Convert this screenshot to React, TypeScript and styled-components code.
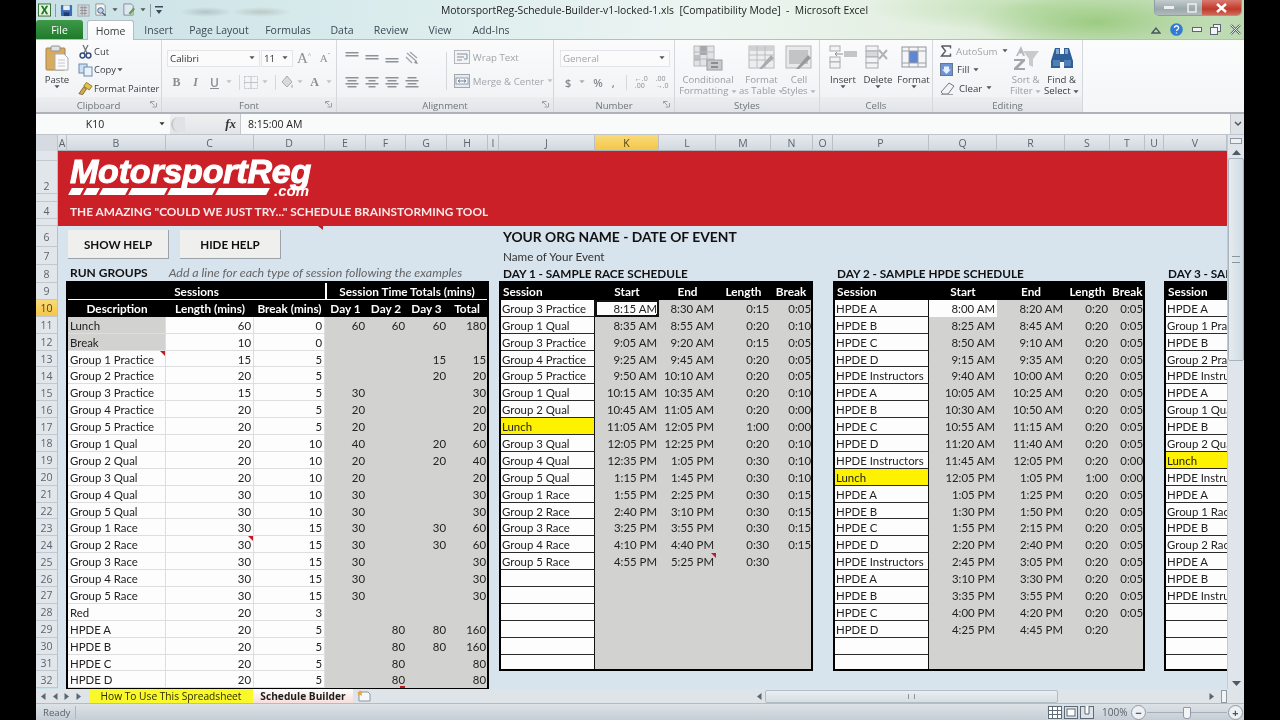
import React from 'react'
import styled, { createGlobalStyle } from 'styled-components'

const ROW = 16.9
const UI_FONT = '"Open Sans", "Noto Sans", sans-serif'
const SHEET_FONT = 'Lato, "Noto Sans", sans-serif'

const GlobalStyle = createGlobalStyle`
  html, body { margin: 0; padding: 0; background: #000; }
  #root { width: 1280px; height: 720px; overflow: hidden; }
`

/* ---------- data ---------- */

const COLUMNS: [string, number][] = [
  ['A', 9], ['B', 99], ['C', 88], ['D', 71], ['E', 41], ['F', 40], ['G', 41], ['H', 41], ['I', 11],
  ['J', 96], ['K', 64], ['L', 57], ['M', 55], ['N', 42], ['O', 20], ['P', 96], ['Q', 68], ['R', 68],
  ['S', 45], ['T', 35], ['U', 19], ['V', 63],
]

const TOP_ROWS: [string, number][] = [
  ['', 10], ['2', 33], ['', 8], ['4', 17], ['', 7], ['6', 21], ['7', 18], ['8', 18],
]

const RUN_GROUPS = [
  ['Lunch', '60', '0', '60', '60', '60', '180'],
  ['Break', '10', '0', '', '', '', ''],
  ['Group 1 Practice', '15', '5', '', '', '15', '15'],
  ['Group 2 Practice', '20', '5', '', '', '20', '20'],
  ['Group 3 Practice', '15', '5', '30', '', '', '30'],
  ['Group 4 Practice', '20', '5', '20', '', '', '20'],
  ['Group 5 Practice', '20', '5', '20', '', '', '20'],
  ['Group 1 Qual', '20', '10', '40', '', '20', '60'],
  ['Group 2 Qual', '20', '10', '20', '', '20', '40'],
  ['Group 3 Qual', '20', '10', '20', '', '', '20'],
  ['Group 4 Qual', '30', '10', '30', '', '', '30'],
  ['Group 5 Qual', '30', '10', '30', '', '', '30'],
  ['Group 1 Race', '30', '15', '30', '', '30', '60'],
  ['Group 2 Race', '30', '15', '30', '', '30', '60'],
  ['Group 3 Race', '30', '15', '30', '', '', '30'],
  ['Group 4 Race', '30', '15', '30', '', '', '30'],
  ['Group 5 Race', '30', '15', '30', '', '', '30'],
  ['Red', '20', '3', '', '', '', ''],
  ['HPDE A', '20', '5', '', '80', '80', '160'],
  ['HPDE B', '20', '5', '', '80', '80', '160'],
  ['HPDE C', '20', '5', '', '80', '', '80'],
  ['HPDE D', '20', '5', '', '80', '', '80'],
]

const DAY_ONE = [
  ['Group 3 Practice', '8:15 AM', '8:30 AM', '0:15', '0:05'],
  ['Group 1 Qual', '8:35 AM', '8:55 AM', '0:20', '0:10'],
  ['Group 3 Practice', '9:05 AM', '9:20 AM', '0:15', '0:05'],
  ['Group 4 Practice', '9:25 AM', '9:45 AM', '0:20', '0:05'],
  ['Group 5 Practice', '9:50 AM', '10:10 AM', '0:20', '0:05'],
  ['Group 1 Qual', '10:15 AM', '10:35 AM', '0:20', '0:10'],
  ['Group 2 Qual', '10:45 AM', '11:05 AM', '0:20', '0:00'],
  ['Lunch', '11:05 AM', '12:05 PM', '1:00', '0:00'],
  ['Group 3 Qual', '12:05 PM', '12:25 PM', '0:20', '0:10'],
  ['Group 4 Qual', '12:35 PM', '1:05 PM', '0:30', '0:10'],
  ['Group 5 Qual', '1:15 PM', '1:45 PM', '0:30', '0:10'],
  ['Group 1 Race', '1:55 PM', '2:25 PM', '0:30', '0:15'],
  ['Group 2 Race', '2:40 PM', '3:10 PM', '0:30', '0:15'],
  ['Group 3 Race', '3:25 PM', '3:55 PM', '0:30', '0:15'],
  ['Group 4 Race', '4:10 PM', '4:40 PM', '0:30', '0:15'],
  ['Group 5 Race', '4:55 PM', '5:25 PM', '0:30', ''],
  [], [], [], [], [], [],
]

const DAY_TWO = [
  ['HPDE A', '8:00 AM', '8:20 AM', '0:20', '0:05'],
  ['HPDE B', '8:25 AM', '8:45 AM', '0:20', '0:05'],
  ['HPDE C', '8:50 AM', '9:10 AM', '0:20', '0:05'],
  ['HPDE D', '9:15 AM', '9:35 AM', '0:20', '0:05'],
  ['HPDE Instructors', '9:40 AM', '10:00 AM', '0:20', '0:05'],
  ['HPDE A', '10:05 AM', '10:25 AM', '0:20', '0:05'],
  ['HPDE B', '10:30 AM', '10:50 AM', '0:20', '0:05'],
  ['HPDE C', '10:55 AM', '11:15 AM', '0:20', '0:05'],
  ['HPDE D', '11:20 AM', '11:40 AM', '0:20', '0:05'],
  ['HPDE Instructors', '11:45 AM', '12:05 PM', '0:20', '0:00'],
  ['Lunch', '12:05 PM', '1:05 PM', '1:00', '0:00'],
  ['HPDE A', '1:05 PM', '1:25 PM', '0:20', '0:05'],
  ['HPDE B', '1:30 PM', '1:50 PM', '0:20', '0:05'],
  ['HPDE C', '1:55 PM', '2:15 PM', '0:20', '0:05'],
  ['HPDE D', '2:20 PM', '2:40 PM', '0:20', '0:05'],
  ['HPDE Instructors', '2:45 PM', '3:05 PM', '0:20', '0:05'],
  ['HPDE A', '3:10 PM', '3:30 PM', '0:20', '0:05'],
  ['HPDE B', '3:35 PM', '3:55 PM', '0:20', '0:05'],
  ['HPDE C', '4:00 PM', '4:20 PM', '0:20', '0:05'],
  ['HPDE D', '4:25 PM', '4:45 PM', '0:20', ''],
  [], [],
]

const DAY_THREE = [
  'HPDE A', 'Group 1 Practice', 'HPDE B', 'Group 2 Practice', 'HPDE Instructors', 'HPDE A', 'Group 1 Qual',
  'HPDE B', 'Group 2 Qual', 'Lunch', 'HPDE Instructors', 'HPDE A', 'Group 1 Race', 'HPDE B', 'Group 2 Race',
  'HPDE A', 'HPDE B', 'HPDE Instructors', '', '', '', '',
].map((s) => (s ? [s, '', '', '', ''] : []))

const DAY_HEADERS = ['Session', 'Start', 'End', 'Length', 'Break']

/* ---------- icons ---------- */

const Arrow = ({ color = '#555' }: { color?: string }) => (
  <svg width="6" height="4" viewBox="0 0 7 4"><path d="M0.5 0h6L3.5 3.6z" fill={color} /></svg>
)

const ExcelLogo = () => (
  <svg width="13" height="14" viewBox="0 0 14 14">
    <rect x="0.5" y="0.5" width="13" height="13" fill="#e9f3dd" stroke="#2b6b2b" />
    <path d="M3 2.5h2.4L7 5.5l1.6-3H11L8.3 7 11 11.5H8.6L7 8.4l-1.6 3.1H3L5.7 7z" fill="#1f7a2e" />
  </svg>
)

const SaveIcon = () => (
  <svg width="13" height="13" viewBox="0 0 14 14">
    <rect x="1" y="1" width="12" height="12" rx="1" fill="#3d6db5" />
    <rect x="3.5" y="1.5" width="7" height="5" fill="#e8eef6" />
    <rect x="4" y="9" width="6" height="4" fill="#1e3a72" />
  </svg>
)

const CalcIcon = () => (
  <svg width="13" height="13" viewBox="0 0 14 14">
    <rect x="1" y="1" width="12" height="12" fill="#d5d7da" stroke="#a3a6aa" />
    <path d="M3 4h8M3 7h8M3 10h8M5.5 2v10M8.5 2v10" stroke="#8d9094" />
  </svg>
)

const PreviewIcon = () => (
  <svg width="14" height="14" viewBox="0 0 15 15">
    <path d="M2 1h8l2 2v10H2z" fill="#f4f5f6" stroke="#8d9094" />
    <circle cx="7" cy="8" r="3" fill="#bcd6ee" stroke="#46607e" />
    <path d="M9 10.5l3.5 3" stroke="#46607e" strokeWidth="1.6" />
  </svg>
)

const PageEditIcon = () => (
  <svg width="14" height="14" viewBox="0 0 15 15">
    <path d="M2 1h8l2 2v10H2z" fill="#dfe8f2" stroke="#7f8c9a" />
    <path d="M7 11l5-6 2 1.5-5 6z" fill="#62a044" />
  </svg>
)

const CustomizeIcon = () => (
  <svg width="8" height="10" viewBox="0 0 8 10"><path d="M0 1h8v1.5H0zM1 5h6L4 9z" fill="#3a4a5a" /></svg>
)

const PasteIcon = () => (
  <svg width="24" height="26" viewBox="0 0 24 26">
    <rect x="1" y="3" width="19" height="22" rx="1" fill="#d8ac5f" stroke="#a4834a" />
    <rect x="6" y="1" width="9" height="5" rx="1" fill="#dfe2e6" stroke="#8f949a" />
    <path d="M10 9h9l4 4v12H10z" fill="#fbfbfb" stroke="#a9adb2" />
    <path d="M13 15h7M13 18h7M13 21h7" stroke="#c2c6cb" />
  </svg>
)

const CutIcon = () => (
  <svg width="15" height="15" viewBox="0 0 15 15">
    <path d="M5 1l4 8M10 1L6 9" stroke="#6f7680" strokeWidth="1.3" />
    <circle cx="4.5" cy="11.5" r="2.4" fill="none" stroke="#33507c" strokeWidth="1.5" />
    <circle cx="10.5" cy="11.5" r="2.4" fill="none" stroke="#33507c" strokeWidth="1.5" />
  </svg>
)

const CopyIcon = () => (
  <svg width="15" height="14" viewBox="0 0 15 14">
    <rect x="1" y="1" width="8" height="9" fill="#cddff2" stroke="#6a8ab0" />
    <rect x="6" y="4" width="8" height="9" fill="#eaf2fb" stroke="#6a8ab0" />
  </svg>
)

const PainterIcon = () => (
  <svg width="15" height="15" viewBox="0 0 16 15">
    <path d="M9 1l6 4-3 4-6-4z" fill="#e3c24b" stroke="#8d7728" />
    <path d="M6 6l3 2-4 6-4-1z" fill="#d7a948" stroke="#7d6a37" />
  </svg>
)

const Launcher = () => (
  <svg width="7" height="7" viewBox="0 0 7 7">
    <path d="M0.5 2.5v-2h4M0.5 0.5l4 4M2.5 6h4V2" stroke="#9aa0a6" fill="none" />
  </svg>
)

const LinesIcon = ({ widths, color = '#8e9297' }: { widths: number[]; color?: string }) => (
  <svg width="14" height="12" viewBox="0 0 14 12">
    {widths.map((w, i) => (
      <rect key={i} x={(14 - w) / 2} y={1 + i * 3} width={w} height="1.5" fill={color} />
    ))}
  </svg>
)

const OrientIcon = () => (
  <svg width="15" height="14" viewBox="0 0 15 14">
    <path d="M2 2l9 8M5 1l7 6M1 6l6 6" stroke="#a2a6ab" strokeWidth="1.4" />
    <path d="M11 9l2 4-4-1z" fill="#8e9297" />
  </svg>
)

const WrapIcon = () => (
  <svg width="16" height="14" viewBox="0 0 16 14">
    <rect x="0.5" y="0.5" width="15" height="13" fill="#f2f3f4" stroke="#b4b7bb" />
    <path d="M3 4h10M3 7h7M3 10h5" stroke="#8b8f94" />
    <path d="M13 4v5h-3" stroke="#7b93b3" fill="none" />
  </svg>
)

const MergeIcon = () => (
  <svg width="16" height="14" viewBox="0 0 16 14">
    <rect x="0.5" y="0.5" width="15" height="13" fill="#e8eaec" stroke="#a4a7ab" />
    <rect x="2" y="4" width="12" height="6" fill="#fbfbfb" stroke="#8a9cb6" />
    <path d="M4 7h8M4 7l2-1.5M4 7l2 1.5M12 7l-2-1.5M12 7l-2 1.5" stroke="#6d7f97" />
  </svg>
)

const CondIcon = () => (
  <svg width="30" height="26" viewBox="0 0 30 26">
    <rect x="1" y="1" width="20" height="20" fill="#e2e3e5" stroke="#b6b8bc" />
    <rect x="7" y="1" width="7" height="9" fill="#a4a7ab" />
    <rect x="1" y="10" width="6" height="6" fill="#bfc1c4" />
    <path d="M1 7h20M1 14h20M7 1v20M14 1v20" stroke="#b6b8bc" />
    <rect x="14" y="15" width="15" height="10" fill="#c7c9cc" stroke="#9c9ea2" />
    <path d="M18 18h7M18 22h7" stroke="#77797d" strokeWidth="1.5" />
  </svg>
)

const TableIcon = () => (
  <svg width="28" height="26" viewBox="0 0 28 26">
    <rect x="1" y="1" width="25" height="22" fill="#eceded" stroke="#b8babd" />
    <rect x="1" y="1" width="25" height="5" fill="#cfd1d3" />
    <path d="M1 10h25M1 15h25M9 1v22M17 1v22" stroke="#babcbf" />
    <path d="M11 24l12-14 3 3-12 11z" fill="#a9abae" />
  </svg>
)

const CellStyleIcon = () => (
  <svg width="28" height="26" viewBox="0 0 28 26">
    <rect x="1" y="1" width="25" height="22" fill="#e8e9ea" stroke="#b3b5b8" />
    <rect x="4" y="5" width="19" height="14" fill="#c2c4c6" />
    <path d="M11 24l12-14 3 3-12 11z" fill="#97999c" />
  </svg>
)

const InsertIcon = () => (
  <svg width="28" height="24" viewBox="0 0 28 24">
    <rect x="1" y="1" width="10" height="5" fill="#f3f3f3" stroke="#a9acb0" />
    <rect x="1" y="12" width="10" height="5" fill="#f3f3f3" stroke="#a9acb0" />
    <rect x="1" y="17" width="10" height="6" fill="#f3f3f3" stroke="#a9acb0" />
    <rect x="15" y="6" width="13" height="6" fill="#c3c5c8" />
    <path d="M6 9h8M6 9l2-2M6 9l2 2" stroke="#8d9094" />
  </svg>
)

const DeleteIcon = () => (
  <svg width="26" height="24" viewBox="0 0 26 24">
    <rect x="1" y="1" width="12" height="5" fill="#f3f3f3" stroke="#a9acb0" />
    <rect x="1" y="6" width="12" height="6" fill="#d6d8da" stroke="#a9acb0" />
    <rect x="1" y="12" width="12" height="6" fill="#f3f3f3" stroke="#a9acb0" />
    <rect x="1" y="18" width="12" height="5" fill="#f3f3f3" stroke="#a9acb0" />
    <path d="M14 5l8 9M22 5l-8 9" stroke="#b0b2b5" strokeWidth="2" />
  </svg>
)

const FormatIcon = () => (
  <svg width="26" height="24" viewBox="0 0 26 24">
    <rect x="1" y="2" width="24" height="20" fill="#f4f5f6" stroke="#8f959c" />
    <rect x="8" y="6" width="9" height="12" fill="#5f86cf" />
    <path d="M1 6h24M1 18h24M8 2v20M17 2v20" stroke="#9aa0a6" />
  </svg>
)

const SigmaIcon = () => (
  <svg width="12" height="12" viewBox="0 0 12 12">
    <path d="M1.5 1h9v2.5M10.5 11h-9l4-5-4-5M1.5 11h9V8.5" fill="none" stroke="#555b62" strokeWidth="1.4" />
  </svg>
)

const FillIcon = () => (
  <svg width="13" height="13" viewBox="0 0 13 13">
    <rect x="0.5" y="0.5" width="12" height="12" fill="#6a95d8" stroke="#6b7686" />
    <path d="M4 3.5h5v3h2L6.5 11 2 6.5h2z" fill="#e6eef9" />
  </svg>
)

const EraserIcon = () => (
  <svg width="15" height="13" viewBox="0 0 15 13">
    <path d="M9 1l5 3-6 8H3L1 10z" fill="#f3f3f3" stroke="#727880" />
    <path d="M1 12.5h12" stroke="#9aa0a6" />
  </svg>
)

const SortIcon = () => (
  <svg width="28" height="26" viewBox="0 0 28 26">
    <path d="M9 1l4 10h-2l-1-2.5H7L6 11H4z" fill="#b7babd" />
    <path d="M2 14h11v2l-7 7h7v2H2v-2l7-7H2z" fill="#a3a6a9" />
    <path d="M11 6h16l-6 8v8l-4-2v-6z" fill="#c8cacc" />
  </svg>
)

const FindIcon = () => (
  <svg width="24" height="24" viewBox="0 0 24 24">
    <path d="M5 3h5v6h4V3h5l4 13v7H14v-6h-4v6H1v-7z" fill="#2f5f98" />
    <path d="M6 4h3v5H6zM15 4h3v5h-3z" fill="#7ea5cf" />
    <rect x="3" y="15" width="7" height="6" fill="#4f7fb5" />
    <rect x="14" y="15" width="7" height="6" fill="#4f7fb5" />
  </svg>
)

const HelpIcon = () => (
  <svg width="13" height="13" viewBox="0 0 13 13">
    <circle cx="6.5" cy="6.5" r="6.3" fill="#2f7cd6" />
    <path d="M4.4 4.8a2.1 2 0 1 1 3.2 1.7c-.8.5-1.1.8-1.1 1.6M6.5 9.4v1.2" fill="none" stroke="#fff" strokeWidth="1.4" />
  </svg>
)

const NewSheetIcon = () => (
  <svg width="14" height="12" viewBox="0 0 14 12">
    <path d="M2 2h9l2 2v7H2z" fill="#f7f8f9" stroke="#8b96a4" />
    <path d="M3 0l1 2 2 0-1.5 1.5L5 6 3 4.7 1 6l.5-2.5L0 2h2z" fill="#e2a73f" />
  </svg>
)

const ViewIcon = ({ kind }: { kind: 'grid' | 'page' | 'break' }) => (
  <svg width="14" height="13" viewBox="0 0 14 13">
    <rect x="0.5" y="0.5" width="13" height="12" fill={kind === 'grid' ? '#fff' : '#dfe3e7'} stroke="#5d6a78" />
    {kind === 'grid' && <path d="M0 4.5h14M0 8.5h14M4.5 0v13M9.5 0v13" stroke="#5d6a78" />}
    {kind === 'page' && <rect x="3" y="3" width="8" height="7" fill="#fff" stroke="#5d6a78" />}
    {kind === 'break' && <path d="M5 0v8h4V0" fill="#fff" stroke="#5d6a78" />}
  </svg>
)

const TRIANGLE_LEFT = (
  <svg width="5" height="7" viewBox="0 0 5 7"><path d="M4.5 0v7L0 3.5z" fill="#5b6672" /></svg>
)
const TRIANGLE_RIGHT = (
  <svg width="5" height="7" viewBox="0 0 5 7"><path d="M0.5 0v7L5 3.5z" fill="#5b6672" /></svg>
)

/* ---------- components ---------- */

const DayTable: React.FC<{
  title: string
  cols: number[]
  rows: string[][]
  active?: boolean
  whiteStart?: boolean
  note?: boolean
  width: number
}> = ({ title, cols, rows, active, whiteStart, note, width }) => (
  <Day $width={width}>
    <DayTitle>{title}</DayTitle>
    <ScheduleGrid $cols={cols.map((c) => `${c}px`).join(' ')}>
      {DAY_HEADERS.map((h, i) => (
        <HeadCell key={h} $align={i === 0 ? 'left' : 'center'}>{h}</HeadCell>
      ))}
      {rows.map((row, r) => (
        <React.Fragment key={r}>
          <SessionCell $lunch={row[0] === 'Lunch'}>{row[0]}</SessionCell>
          {[1, 2, 3, 4].map((c) => (
            <TimeCell key={c} $flush={c === 4} $white={c === 1 && r === 0 && (whiteStart || active)}>
              {row[c]}
              {active && c === 1 && r === 0 && <ActiveBox />}
              {note && c === 2 && r === 15 && <Note />}
            </TimeCell>
          ))}
        </React.Fragment>
      ))}
    </ScheduleGrid>
  </Day>
)

const LargeButton: React.FC<{
  icon: React.ReactNode
  lines: string[]
  width: number
  dim?: boolean
}> = ({ icon, lines, width, dim }) => (
  <Large $width={width} $dim={dim}>
    <LargeIcon>{icon}</LargeIcon>
    {lines.map((l, i) => (
      <div key={l}>
        {l}
        {i === lines.length - 1 && lines.length > 1 && (
          <> <Arrow color={dim ? '#b5b8bb' : '#555'} /></>
        )}
      </div>
    ))}
    {lines.length === 1 && <Arrow color={dim ? '#b5b8bb' : '#555'} />}
  </Large>
)

/* a ribbon group: content on top, caption below */
function Group({ $width, label, launcher, children }: {
  $width: number
  label: string
  launcher?: boolean
  children: React.ReactNode
}) {
  return (
    <GroupBox $width={$width}>
      <GroupBody>{children}</GroupBody>
      <GroupLabel>
        {label}
        {launcher && <LauncherSlot><Launcher /></LauncherSlot>}
      </GroupLabel>
    </GroupBox>
  )
}

const App: React.FC = () => (
  <>
    <GlobalStyle />
    <Screen>
      <Window>
        <TitleBar>
          <QuickAccess>
            <ExcelLogo />
            <QuickSep />
            <SaveIcon />
            <CalcIcon />
            <PreviewIcon />
            <Arrow />
            <PageEditIcon />
            <Arrow />
            <QuickSep />
            <CustomizeIcon />
          </QuickAccess>
          <WindowTitle>MotorsportReg-Schedule-Builder-v1-locked-1.xls&nbsp; [Compatibility Mode]&nbsp; -&nbsp; Microsoft Excel</WindowTitle>
          <WindowControls>
            <WinButton $width={27}><svg width="10" height="3"><rect width="10" height="3" fill="#eee" /></svg></WinButton>
            <WinButton $width={20}><svg width="10" height="10"><rect x="1" y="1" width="8" height="8" fill="none" stroke="#eee" strokeWidth="1.5" /></svg></WinButton>
            <WinButton $width={39} $close><svg width="11" height="10" viewBox="0 0 11 10"><path d="M1 1l9 8M10 1l-9 8" stroke="#fff" strokeWidth="2.4" /></svg></WinButton>
          </WindowControls>
        </TitleBar>

        <TabRow>
          <FileTab>File</FileTab>
          <HomeTab>Home</HomeTab>
          <RibbonTab $width={49}>Insert</RibbonTab>
          <RibbonTab $width={72}>Page Layout</RibbonTab>
          <RibbonTab $width={66}>Formulas</RibbonTab>
          <RibbonTab $width={42}>Data</RibbonTab>
          <RibbonTab $width={56}>Review</RibbonTab>
          <RibbonTab $width={42}>View</RibbonTab>
          <RibbonTab $width={60}>Add-Ins</RibbonTab>
          <TabTools>
            <svg width="10" height="8" viewBox="0 0 10 8"><path d="M1 7l4-5 4 5H1z" fill="none" stroke="#4a5561" strokeWidth="1.3" /></svg>
            <HelpIcon />
            <svg width="10" height="6"><rect x="0.5" y="0.5" width="9" height="4" fill="#f2f4f6" stroke="#5c6670" /></svg>
            <svg width="11" height="11"><rect x="3.5" y="0.5" width="7" height="7" fill="#f2f4f6" stroke="#5c6670" /><rect x="0.5" y="3.5" width="7" height="7" fill="#f2f4f6" stroke="#5c6670" /></svg>
            <svg width="11" height="11" viewBox="0 0 11 11"><path d="M1 1l9 9M10 1l-9 9" stroke="#5c6670" strokeWidth="2.4" /><path d="M1 1l9 9M10 1l-9 9" stroke="#f2f4f6" strokeWidth="0.9" /></svg>
          </TabTools>
        </TabRow>

        <Ribbon>
          <Group $width={126} label="Clipboard" launcher>
            <ClipboardBody>
              <Large $width={42}>
                <LargeIcon><PasteIcon /></LargeIcon>
                <div>Paste</div>
                <Arrow />
              </Large>
              <SmallList>
                <SmallItem><CutIcon />Cut</SmallItem>
                <SmallItem><CopyIcon />Copy <Arrow /></SmallItem>
                <SmallItem><PainterIcon />Format Painter</SmallItem>
              </SmallList>
            </ClipboardBody>
          </Group>

          <Group $width={175} label="Font" launcher>
            <ToolRows $pad={5}>
              <ToolRow>
                <Combo $width={93}>Calibri <Arrow /></Combo>
                <Combo $width={32}>11 <Arrow /></Combo>
                <GrowGlyph $size={15}>A<sup>^</sup></GrowGlyph>
                <GrowGlyph $size={11}>A<sup>ˇ</sup></GrowGlyph>
              </ToolRow>
              <ToolRow $gap={0}>
                <FormatGlyph $weight={700} $serif>B</FormatGlyph>
                <FormatGlyph $italic $serif>I</FormatGlyph>
                <FormatGlyph $underline>U</FormatGlyph>
                <ArrowSlot $width={9}><Arrow color="#c0c3c6" /></ArrowSlot>
                <ToolSep $before={6} $after={4} />
                <svg width="14" height="13"><rect x="0.5" y="0.5" width="13" height="12" fill="none" stroke="#c0c3c6" strokeDasharray="2 1" /><path d="M7 0v13M0 6.5h14" stroke="#c0c3c6" /></svg>
                <ArrowSlot $width={14}><Arrow color="#c0c3c6" /></ArrowSlot>
                <ToolSep $before={3} $after={3} />
                <svg width="16" height="14" viewBox="0 0 16 14"><path d="M3 7l5-6 5 6-5 5z" fill="#d7d9db" stroke="#a9acaf" /><path d="M13 9c1 2 2 3 0 4-2-1-1-2 0-4z" fill="#c3c5c8" /></svg>
                <ArrowSlot $width={10}><Arrow color="#c0c3c6" /></ArrowSlot>
                <FormatGlyph $weight={700} $serif>A</FormatGlyph>
                <ArrowSlot $width={10}><Arrow color="#c0c3c6" /></ArrowSlot>
              </ToolRow>
            </ToolRows>
          </Group>

          <Group $width={217} label="Alignment" launcher>
            <AlignBody>
              <AlignGrid>
                <LinesIcon widths={[13, 13, 0, 0]} />
                <LinesIcon widths={[0, 13, 13, 0]} />
                <LinesIcon widths={[0, 0, 13, 13]} />
                <OrientIcon />
                <LinesIcon widths={[13, 9, 13, 9]} />
                <LinesIcon widths={[13, 7, 13, 7]} />
                <LinesIcon widths={[13, 9, 13, 9]} />
                <LinesIcon widths={[9, 13, 9, 13]} />
              </AlignGrid>
              <ToolSepTall />
              <SmallList $dim>
                <WideItem><WrapIcon />Wrap Text</WideItem>
                <WideItem><MergeIcon />Merge &amp; Center <Arrow color="#c0c3c6" /></WideItem>
              </SmallList>
            </AlignBody>
          </Group>

          <Group $width={121} label="Number" launcher>
            <ToolRows $pad={6}>
              <ToolRow>
                <Combo $width={110} $dim>General <Arrow /></Combo>
              </ToolRow>
              <ToolRow $gap={8} $indent={5}>
                <NumberGlyph>$</NumberGlyph>
                <Arrow color="#a9acaf" />
                <NumberGlyph>%</NumberGlyph>
                <NumberGlyph $pad>,</NumberGlyph>
                <ToolSep />
                <DecimalGlyph>←.0<br />.00</DecimalGlyph>
                <DecimalGlyph>.00<br />→.0</DecimalGlyph>
              </ToolRow>
            </ToolRows>
          </Group>

          <Group $width={145} label="Styles">
            <LargeRow $indent={2}>
              <LargeButton dim width={62} icon={<CondIcon />} lines={['Conditional', 'Formatting']} />
              <LargeButton dim width={45} icon={<TableIcon />} lines={['Format', 'as Table']} />
              <LargeButton dim width={30} icon={<CellStyleIcon />} lines={['Cell', 'Styles']} />
            </LargeRow>
          </Group>

          <Group $width={113} label="Cells">
            <LargeRow $indent={6}>
              <LargeButton width={34} icon={<InsertIcon />} lines={['Insert']} />
              <LargeButton width={36} icon={<DeleteIcon />} lines={['Delete']} />
              <LargeButton width={35} icon={<FormatIcon />} lines={['Format']} />
            </LargeRow>
          </Group>

          <Group $width={150} label="Editing">
            <EditingBody>
              <SmallList>
                <EditingItem $dim><SigmaIcon />AutoSum <Arrow /></EditingItem>
                <EditingItem><FillIcon />Fill <Arrow /></EditingItem>
                <EditingItem><EraserIcon />Clear <Arrow /></EditingItem>
              </SmallList>
              <LargeRow>
                <LargeButton dim width={36} icon={<SortIcon />} lines={['Sort &', 'Filter']} />
                <LargeButton width={36} icon={<FindIcon />} lines={['Find &', 'Select']} />
              </LargeRow>
            </EditingBody>
          </Group>
        </Ribbon>

        <FormulaBar>
          <NameBox>K10<NameArrow><Arrow color="#333" /></NameArrow></NameBox>
          <FormulaTools>
            <Knob />
            <FxLabel>fx</FxLabel>
          </FormulaTools>
          <FormulaInput>8:15:00 AM</FormulaInput>
          <FormulaExpand>
            <svg width="8" height="6" viewBox="0 0 8 6"><path d="M1 1l3 3 3-3" fill="none" stroke="#4d5761" strokeWidth="1.5" /></svg>
          </FormulaExpand>
        </FormulaBar>

        <SheetArea>
          <SheetMain>
            <ColumnHeaders>
              <Corner />
              {COLUMNS.map(([name, w]) => (
                <ColumnHead key={name} $width={w} $active={name === 'K'}>{name}</ColumnHead>
              ))}
            </ColumnHeaders>

            <SheetBody>
              <RowHeaders>
                {TOP_ROWS.map(([label, h], i) => (
                  <RowHead key={i} $height={h} $bottom={label === '2'}>{label}</RowHead>
                ))}
                {Array.from({ length: 24 }, (_, i) => i + 9).map((n) => (
                  <RowHead key={n} $height={ROW} $active={n === 10}>{n}</RowHead>
                ))}
              </RowHeaders>

              <Content>
                <Banner>
                  <LogoWord>MotorsportReg</LogoWord>
                  <StripeRow>
                    {[12, 13, 26, 36, 45, 51].map((w, i) => <Stripe key={i} $width={w} />)}
                    <DotCom>.com</DotCom>
                  </StripeRow>
                  <Tagline>THE AMAZING "COULD WE JUST TRY..." SCHEDULE BRAINSTORMING TOOL</Tagline>
                  <BannerNote />
                </Banner>

                <Panels>
                  <LeftPanel>
                    <HelpButtons>
                      <HelpButton>SHOW HELP</HelpButton>
                      <HelpButton>HIDE HELP</HelpButton>
                    </HelpButtons>
                    <RunGroupsLine>
                      <strong>RUN GROUPS</strong>
                      <em>Add a line for each type of session following the examples</em>
                    </RunGroupsLine>
                    <RunGrid>
                      <HeadCell $span={3} $align="center" $rule>Sessions</HeadCell>
                      <HeadCell $span={4} $align="center" $divider $rule>Session Time Totals (mins)</HeadCell>
                      <HeadCell $align="center">Description</HeadCell>
                      <HeadCell $align="center">Length (mins)</HeadCell>
                      <HeadCell $align="center">Break (mins)</HeadCell>
                      <HeadCell $align="center">Day 1</HeadCell>
                      <HeadCell $align="center">Day 2</HeadCell>
                      <HeadCell $align="center">Day 3</HeadCell>
                      <HeadCell $align="center">Total</HeadCell>
                      {RUN_GROUPS.map((row) => (
                        <React.Fragment key={row[0]}>
                          <NameCell $grey={row[0] === 'Lunch' || row[0] === 'Break'}>
                            {row[0]}
                            {row[0] === 'Group 1 Practice' && <Note />}
                          </NameCell>
                          <InputCell>
                            {row[1]}
                            {row[0] === 'Group 2 Race' && <Note />}
                          </InputCell>
                          <InputCell>{row[2]}</InputCell>
                          {row.slice(3).map((v, i) => (
                            <TotalCell key={i}>
                              {v}
                              {row[0] === 'HPDE D' && i === 1 && <EdgeNote />}
                            </TotalCell>
                          ))}
                        </React.Fragment>
                      ))}
                    </RunGrid>
                  </LeftPanel>

                  <RightPanel>
                    <OrgTitle>YOUR ORG NAME - DATE OF EVENT</OrgTitle>
                    <EventName>Name of Your Event</EventName>
                    <Days>
                      <DayTable
                        title="DAY 1 - SAMPLE RACE SCHEDULE"
                        cols={[94, 64, 57, 55, 40]}
                        rows={DAY_ONE}
                        width={315}
                        active
                        note
                      />
                      <DayTable
                        title="DAY 2 - SAMPLE HPDE SCHEDULE"
                        cols={[94, 68, 68, 45, 33]}
                        rows={DAY_TWO}
                        width={312}
                        whiteStart
                      />
                      <DayTable
                        title="DAY 3 - SAMPLE SCHEDULE"
                        cols={[94, 64, 64, 45, 33]}
                        rows={DAY_THREE}
                        width={304}
                      />
                    </Days>
                  </RightPanel>
                </Panels>
              </Content>
            </SheetBody>
          </SheetMain>

          <VScroll>
            <SplitBox />
            <VArrow>
              <svg width="9" height="5" viewBox="0 0 9 5"><path d="M0 5l4.5-5L9 5z" fill="#4f5a66" /></svg>
            </VArrow>
            <VThumb>
              <Grip />
            </VThumb>
            <VTrack />
            <VArrow>
              <svg width="9" height="5" viewBox="0 0 9 5"><path d="M0 0l4.5 5L9 0z" fill="#4f5a66" /></svg>
            </VArrow>
          </VScroll>
        </SheetArea>

        <TabStrip>
          <SheetNav>
            {TRIANGLE_LEFT}
            {TRIANGLE_LEFT}
            {TRIANGLE_RIGHT}
            {TRIANGLE_RIGHT}
          </SheetNav>
          <YellowTab>How To Use This Spreadsheet</YellowTab>
          <CurrentTab>Schedule Builder</CurrentTab>
          <NewTab><NewSheetIcon /></NewTab>
          <StripSpacer />
          {TRIANGLE_LEFT}
          <HThumb><HGrip /></HThumb>
          <StripEnd>
            {TRIANGLE_RIGHT}
            <HSplit />
          </StripEnd>
        </TabStrip>

        <StatusBar>
          <ReadyText>Ready</ReadyText>
          <StatusSpacer />
          <ViewButtons>
            <ViewButton $on><ViewIcon kind="grid" /></ViewButton>
            <ViewButton><ViewIcon kind="page" /></ViewButton>
            <ViewButton><ViewIcon kind="break" /></ViewButton>
          </ViewButtons>
          <ZoomText>100%</ZoomText>
          <ZoomCircle>−</ZoomCircle>
          <ZoomTrack><ZoomHandle /></ZoomTrack>
          <ZoomCircle>+</ZoomCircle>
          <StatusEnd />
        </StatusBar>
      </Window>
    </Screen>
  </>
)

/* ---------- window chrome ---------- */

const Screen = styled.div`
  width: 1280px;
  height: 720px;
  padding: 0 36px;
  box-sizing: border-box;
  background: #000;
  filter: blur(0.3px);
`

const Window = styled.div`
  display: flex;
  flex-direction: column;
  height: 720px;
  font-family: ${UI_FONT};
  background:
    radial-gradient(ellipse 26px 5px at 170px 12px, rgba(120, 135, 145, 0.35) 0%, rgba(120, 135, 145, 0) 100%),
    radial-gradient(ellipse 30px 5px at 225px 12px, rgba(140, 145, 130, 0.35) 0%, rgba(140, 145, 130, 0) 100%),
    radial-gradient(ellipse 120px 30px at 1060px 22px, #9ccb82 0%, rgba(156, 203, 130, 0) 100%),
    radial-gradient(ellipse 170px 24px at 1000px 8px, #c0dfb0 0%, rgba(192, 223, 176, 0) 100%),
    linear-gradient(90deg, #c9e1e6 0%, #deeeee 35%, #edf5f2 55%, #e3efe0 75%, #bcd9b0 100%);
`

const TitleBar = styled.div`
  position: relative;
  display: flex;
  align-items: center;
  justify-content: center;
  height: 20px;
  flex: none;
`

const QuickAccess = styled.div`
  position: absolute;
  left: 2px;
  top: 3px;
  display: flex;
  align-items: center;
  gap: 4px;
`

const QuickSep = styled.span`
  width: 1px;
  height: 13px;
  background: #8b9aa5;
`

const WindowTitle = styled.div`
  font-size: 10.4px;
  color: #1c1c1c;
  margin-left: 29px;
  white-space: nowrap;
`

const WindowControls = styled.div`
  position: absolute;
  top: 0;
  right: 3px;
  display: flex;
  height: 15px;
  border-radius: 0 0 4px 4px;
  overflow: hidden;
  box-shadow: 0 0 0 1px #8c9fa8;
`

const WinButton = styled.div<{ $width: number; $close?: boolean }>`
  display: flex;
  align-items: center;
  justify-content: center;
  width: ${(p) => p.$width}px;
  background: ${(p) => (p.$close ? 'linear-gradient(#d87a6e, #c0392b 60%, #cf6a5a)' : 'linear-gradient(#c3ccce, #9ba8ab 60%, #b0babb)')};
`

const TabRow = styled.div`
  display: flex;
  align-items: flex-end;
  height: 20px;
  flex: none;
  border-bottom: 1px solid #b6bcc2;
  box-sizing: border-box;
`

const FileTab = styled.div`
  width: 47px;
  height: 19px;
  display: flex;
  align-items: center;
  justify-content: center;
  font-size: 10.5px;
  color: #fff;
  background: linear-gradient(#3e9a48, #1f7a2c);
  border-radius: 3px 3px 0 0;
`

const HomeTab = styled.div`
  width: 47px;
  height: 20px;
  margin-left: 4px;
  margin-bottom: -1px;
  box-sizing: border-box;
  display: flex;
  align-items: center;
  justify-content: center;
  font-size: 10.5px;
  color: #3b3f44;
  background: linear-gradient(#fff, #f7f8f9);
  border: 1px solid #b6bcc2;
  border-bottom: 0;
  border-radius: 3px 3px 0 0;
`

const RibbonTab = styled.div<{ $width: number }>`
  width: ${(p) => p.$width}px;
  height: 19px;
  display: flex;
  align-items: center;
  justify-content: center;
  font-size: 10.5px;
  color: #3d4a55;
`

const TabTools = styled.div`
  margin-left: auto;
  height: 19px;
  width: 90px;
  display: flex;
  align-items: center;
  justify-content: space-between;
  padding-right: 3px;
`

/* ---------- ribbon ---------- */

const Ribbon = styled.div`
  display: flex;
  height: 72px;
  flex: none;
  background: linear-gradient(#fbfcfc, #f5f6f8);
`

const GroupBox = styled.div<{ $width: number }>`
  display: flex;
  flex-direction: column;
  width: ${(p) => p.$width}px;
  flex: none;
  box-sizing: border-box;
  border-right: 1px solid #d4d8dc;
`

const GroupBody = styled.div`
  flex: 1;
  min-height: 0;
  background: linear-gradient(#fbfbfc, #f1f3f5);
`

const GroupLabel = styled.div`
  position: relative;
  height: 15px;
  padding-top: 1px;
  box-sizing: border-box;
  display: flex;
  align-items: center;
  justify-content: center;
  font-size: 9.6px;
  color: #6f757b;
  background: linear-gradient(#eceef1, #e1e4e8);
`

const LauncherSlot = styled.span`
  position: absolute;
  right: 4px;
  top: 4px;
  display: flex;
`

const ClipboardBody = styled.div`
  display: flex;
`

const Large = styled.div<{ $width: number; $dim?: boolean }>`
  width: ${(p) => p.$width}px;
  flex: none;
  display: flex;
  flex-direction: column;
  align-items: center;
  font-size: 9.6px;
  line-height: 11px;
  color: ${(p) => (p.$dim ? '#9a9ea2' : '#3c4044')};
  white-space: nowrap;
`

const LargeIcon = styled.div`
  height: 34px;
  padding-top: 5px;
  box-sizing: border-box;
  display: flex;
  align-items: flex-start;
  justify-content: center;
`

const SmallList = styled.div<{ $dim?: boolean }>`
  display: flex;
  flex-direction: column;
  padding-top: 2px;
  color: ${(p) => (p.$dim ? '#a2a5a9' : '#3c4044')};
`

const SmallItem = styled.div`
  height: 18.5px;
  display: flex;
  align-items: center;
  gap: 1px;
  font-size: 9.4px;
  white-space: nowrap;
`

const WideItem = styled(SmallItem)`
  height: 24px;
  gap: 3px;
  margin-left: 7px;
  font-size: 9.7px;
  color: #a2a5a9;
  &:first-child {
    margin-top: 3px;
  }
`

const EditingItem = styled(SmallItem)<{ $dim?: boolean }>`
  gap: 4px;
  margin-left: 7px;
  font-size: 9.7px;
  color: ${(p) => (p.$dim ? '#a2a5a9' : '#3c4044')};
`

const ToolRows = styled.div<{ $pad: number }>`
  display: flex;
  flex-direction: column;
  padding: 9px 0 0 ${(p) => p.$pad}px;
  gap: 6px;
`

const ToolRow = styled.div<{ $gap?: number; $indent?: number }>`
  display: flex;
  align-items: center;
  height: 18px;
  gap: ${(p) => p.$gap ?? 1}px;
  padding-left: ${(p) => p.$indent ?? 0}px;
`

const Combo = styled.div<{ $width: number; $dim?: boolean }>`
  width: ${(p) => p.$width}px;
  height: 17px;
  box-sizing: border-box;
  padding: 0 4px 0 2px;
  display: flex;
  align-items: center;
  justify-content: space-between;
  font-size: 9.8px;
  color: ${(p) => (p.$dim ? '#a2a5a9' : '#333')};
  background: #fbfbfc;
  border: 1px solid #e3e5e8;
`

const GrowGlyph = styled.div<{ $size: number }>`
  width: 20px;
  text-align: center;
  font-family: 'Liberation Serif', serif;
  font-size: ${(p) => p.$size}px;
  color: #8d9094;
  sup {
    font-size: 7px;
    line-height: 0;
  }
`

const FormatGlyph = styled.span<{ $weight?: number; $italic?: boolean; $underline?: boolean; $serif?: boolean }>`
  width: 19px;
  flex: none;
  text-align: center;
  font-family: ${(p) => (p.$serif ? "'Liberation Serif', serif" : UI_FONT)};
  font-size: 12px;
  font-weight: ${(p) => p.$weight ?? 600};
  font-style: ${(p) => (p.$italic ? 'italic' : 'normal')};
  text-decoration: ${(p) => (p.$underline ? 'underline' : 'none')};
  color: #8a8e92;
`

const ArrowSlot = styled.span<{ $width: number }>`
  width: ${(p) => p.$width}px;
  flex: none;
  display: flex;
  justify-content: center;
`

const ToolSep = styled.span<{ $before?: number; $after?: number }>`
  width: 1px;
  height: 15px;
  flex: none;
  margin: 0 ${(p) => p.$after ?? 0}px 0 ${(p) => p.$before ?? 0}px;
  background: #d5d8db;
`

const ToolSepTall = styled.span`
  width: 1px;
  height: 38px;
  margin: 12px 0 0 4px;
  background: #d5d8db;
`

const AlignBody = styled.div`
  display: flex;
  padding-left: 8px;
`

const AlignGrid = styled.div`
  display: grid;
  grid-template-columns: repeat(3, 14px) 32px;
  column-gap: 6px;
  row-gap: 11px;
  padding-top: 11px;
  align-content: start;
  width: 103px;
`

const NumberGlyph = styled.span<{ $pad?: boolean }>`
  font-size: 11px;
  font-weight: 600;
  color: #84888c;
  padding: ${(p) => (p.$pad ? '0 3px 0 1px' : '0')};
`

const DecimalGlyph = styled.span`
  font-size: 7px;
  line-height: 7px;
  color: #8a8e92;
  white-space: nowrap;
`

const LargeRow = styled.div<{ $indent?: number }>`
  display: flex;
  padding-left: ${(p) => p.$indent ?? 0}px;
`

const EditingBody = styled.div`
  display: flex;
  justify-content: space-between;
  padding-right: 3px;
`

/* ---------- formula bar ---------- */

const FormulaBar = styled.div`
  display: flex;
  align-items: stretch;
  height: 23px;
  flex: none;
  box-sizing: border-box;
  border-top: 2px solid #adb3b9;
  border-bottom: 1px solid #c0c5cb;
  background: #f9fafa;
`

const NameBox = styled.div`
  position: relative;
  width: 134px;
  box-sizing: border-box;
  padding-right: 16px;
  display: flex;
  align-items: center;
  justify-content: center;
  font-size: 10.5px;
  color: #222;
`

const NameArrow = styled.span`
  position: absolute;
  right: 5px;
  top: 8px;
  display: flex;
`

const FormulaTools = styled.div`
  width: 71px;
  display: flex;
  align-items: center;
  justify-content: space-between;
  padding: 0 4px 0 1px;
  box-sizing: border-box;
  background: linear-gradient(#eef0f2, #e2e5e8);
  border-right: 1px solid #c5c9ce;
`

const Knob = styled.div`
  width: 12px;
  height: 15px;
  border-left: 2px solid #c4c8cc;
  border-radius: 8px 0 0 8px;
  background: #e0e3e6;
`

const FxLabel = styled.span`
  font-family: 'Liberation Serif', serif;
  font-style: italic;
  font-weight: 700;
  font-size: 13px;
  color: #333;
`

const FormulaInput = styled.div`
  flex: 1;
  padding-left: 7px;
  display: flex;
  align-items: center;
  font-size: 10.5px;
  color: #222;
`

const FormulaExpand = styled.div`
  width: 13px;
  display: flex;
  align-items: center;
  justify-content: center;
  background: #dfe3e7;
  border-left: 1px solid #c0c5cb;
`

/* ---------- sheet ---------- */

const SheetArea = styled.div`
  display: flex;
  height: 554px;
  flex: none;
`

const SheetMain = styled.div`
  width: 1191px;
  display: flex;
  flex-direction: column;
  overflow: hidden;
`

const ColumnHeaders = styled.div`
  display: flex;
  height: 16px;
  flex: none;
`

const Corner = styled.div`
  width: 22px;
  flex: none;
  background: #d5dbe1;
  border-right: 1px solid #bcc3ca;
  box-sizing: border-box;
`

const ColumnHead = styled.div<{ $width: number; $active?: boolean }>`
  width: ${(p) => p.$width}px;
  flex: none;
  box-sizing: border-box;
  display: flex;
  align-items: center;
  justify-content: center;
  overflow: hidden;
  font-size: 10.5px;
  color: ${(p) => (p.$active ? '#4e3f10' : '#5a6470')};
  background: ${(p) => (p.$active ? 'linear-gradient(#f9db78, #f4c64a)' : 'linear-gradient(#e6eaee, #d3d9df)')};
  border-right: 1px solid #b9c0c7;
  border-bottom: 1px solid #a9b1b9;
`

const SheetBody = styled.div`
  display: flex;
  flex: 1;
  min-height: 0;
`

const RowHeaders = styled.div`
  width: 22px;
  flex: none;
  display: flex;
  flex-direction: column;
`

const RowHead = styled.div<{ $height: number; $active?: boolean; $bottom?: boolean }>`
  height: ${(p) => p.$height}px;
  flex: none;
  box-sizing: border-box;
  padding-top: ${(p) => (p.$bottom ? 0 : 1)}px;
  display: flex;
  align-items: ${(p) => (p.$bottom ? 'flex-end' : 'center')};
  justify-content: center;
  overflow: hidden;
  font-size: 10.5px;
  line-height: 14px;
  color: ${(p) => (p.$active ? '#4e3f10' : '#5a6470')};
  background: ${(p) => (p.$active ? 'linear-gradient(#f9db78, #f4c64a)' : '#e1e6eb')};
  border-bottom: 1px solid #c2c8ce;
  border-right: 1px solid #b9c0c7;
`

const Content = styled.div`
  width: 1169px;
  flex: none;
  display: flex;
  flex-direction: column;
  overflow: hidden;
  background: #d7e3ed;
  font-family: ${SHEET_FONT};
  color: #222;
`

const Banner = styled.div`
  position: relative;
  height: 75px;
  flex: none;
  padding: 5px 0 0 12px;
  box-sizing: border-box;
  background: #cb2027;
  color: #fff;
`

const BannerNote = styled.span`
  position: absolute;
  left: 260px;
  bottom: -4px;
  border-left: 5px solid transparent;
  border-top: 4px solid #c01c24;
`

const LogoWord = styled.div`
  font-family: 'Liberation Sans', Arial, sans-serif;
  font-size: 34px;
  line-height: 30px;
  font-weight: 700;
  font-style: italic;
  letter-spacing: -0.2px;
  -webkit-text-stroke: 1px #fff;
`

const StripeRow = styled.div`
  display: flex;
  align-items: center;
  gap: 3px;
  height: 10px;
`

const Stripe = styled.span<{ $width: number }>`
  width: ${(p) => p.$width}px;
  height: 7px;
  background: #fff;
  transform: skewX(-28deg);
`

const DotCom = styled.span`
  font-family: 'Liberation Sans', Arial, sans-serif;
  font-size: 15px;
  line-height: 10px;
  font-weight: 700;
  font-style: italic;
  margin-left: 3px;
`

const Tagline = styled.div`
  font-size: 11.85px;
  line-height: 16px;
  font-weight: 700;
  margin-top: 8px;
  white-space: nowrap;
  color: #f8eaea;
`

const Panels = styled.div`
  display: flex;
  flex: 1;
  min-height: 0;
`

const LeftPanel = styled.div`
  width: 441px;
  flex: none;
  display: flex;
  flex-direction: column;
  padding-left: 8px;
  box-sizing: border-box;
`

const HelpButtons = styled.div`
  display: flex;
  gap: 11px;
  padding: 4px 0 0 2px;
  height: 33px;
  box-sizing: border-box;
  flex: none;
`

const HelpButton = styled.div`
  width: 101px;
  height: 29px;
  display: flex;
  align-items: center;
  justify-content: center;
  font-size: 11.6px;
  font-weight: 700;
  color: #111;
  background: #efefed;
  border-right: 1px solid #9da3a9;
  border-bottom: 1px solid #9da3a9;
  box-sizing: border-box;
`

const RunGroupsLine = styled.div`
  height: 22px;
  flex: none;
  box-sizing: border-box;
  padding: 4px 0 0 4px;
  display: flex;
  align-items: center;
  gap: 21px;
  font-size: 12px;
  white-space: nowrap;
  strong {
    font-weight: 700;
    color: #111;
  }
  em {
    color: #666;
    font-size: 12.4px;
  }
`

const RunGrid = styled.div`
  width: 423px;
  box-sizing: border-box;
  border: 2px solid #000;
  display: grid;
  grid-template-columns: 98px 88px 71px 41px 40px 41px 40px;
  grid-auto-rows: ${ROW}px;
  flex: none;
  font-size: 11.4px;
`

const HeadCell = styled.div<{ $align: string; $span?: number; $divider?: boolean; $rule?: boolean }>`
  grid-column: span ${(p) => p.$span ?? 1};
  background: #000;
  color: #fff;
  font-weight: 700;
  font-size: 11.8px;
  line-height: ${ROW + 1}px;
  padding: 0 2px;
  box-sizing: border-box;
  text-align: ${(p) => p.$align};
  white-space: nowrap;
  overflow: hidden;
  ${(p) => p.$divider && 'border-left: 2px solid #fff;'}
  ${(p) => p.$rule && 'border-bottom: 1.5px solid #fff;'}
`

const Note = styled.span`
  position: absolute;
  right: 0;
  top: 0;
  border-left: 5px solid transparent;
  border-top: 5px solid #c21a22;
`

const EdgeNote = styled.span`
  position: absolute;
  right: 1px;
  bottom: 0;
  width: 5px;
  height: 2px;
  background: #c21a22;
`

const BaseCell = styled.div`
  position: relative;
  box-sizing: border-box;
  line-height: ${ROW + 1}px;
  padding: 0 2px;
  white-space: nowrap;
  overflow: hidden;
`

const NameCell = styled(BaseCell)<{ $grey?: boolean }>`
  background: ${(p) => (p.$grey ? '#d2d2d0' : '#fdfdfd')};
  border-bottom: 1px solid #dcdedf;
  border-right: 1px solid #dcdedf;
`

const InputCell = styled(BaseCell)`
  text-align: right;
  background: #fdfdfd;
  border-bottom: 1px solid #dcdedf;
  border-right: 1px solid #dcdedf;
`

const TotalCell = styled(BaseCell)`
  text-align: right;
  background: #d2d2d0;
  padding-right: 1px;
`

const RightPanel = styled.div`
  width: 728px;
  flex: none;
  display: flex;
  flex-direction: column;
`

const OrgTitle = styled.div`
  height: 22px;
  padding-left: 4px;
  font-size: 13.85px;
  line-height: 22px;
  font-weight: 700;
  color: #111;
  white-space: nowrap;
`

const EventName = styled.div`
  height: 17px;
  padding-left: 4px;
  font-size: 11.7px;
  line-height: 16px;
  color: #333;
`

const Days = styled.div`
  display: flex;
  gap: 19px;
`

const Day = styled.div<{ $width: number }>`
  width: ${(p) => p.$width}px;
  flex: none;
`

const DayTitle = styled.div`
  height: 16px;
  padding-left: 4px;
  font-size: 11.75px;
  line-height: 17px;
  font-weight: 700;
  color: #111;
  white-space: nowrap;
`

const ScheduleGrid = styled.div<{ $cols: string }>`
  width: fit-content;
  height: 390px;
  box-sizing: border-box;
  border: 2px solid #000;
  overflow: hidden;
  display: grid;
  grid-template-columns: ${(p) => p.$cols};
  grid-auto-rows: ${ROW}px;
  font-size: 11.4px;
  background: #d2d2d0;
`

const SessionCell = styled(BaseCell)<{ $lunch?: boolean }>`
  padding-left: 1px;
  background: ${(p) => (p.$lunch ? '#fff200' : '#fdfdfd')};
  border-bottom: 1.5px solid #2b2b2b;
  border-right: 1.5px solid #111;
`

const TimeCell = styled(BaseCell)<{ $white?: boolean; $flush?: boolean }>`
  text-align: right;
  overflow: visible;
  padding-right: ${(p) => (p.$flush ? 0 : 2)}px;
  background: ${(p) => (p.$white ? '#fdfdfd' : '#d2d2d0')};
`

const ActiveBox = styled.span`
  position: absolute;
  inset: 0;
  border: 2px solid #111;
  &::after {
    content: '';
    position: absolute;
    right: -3px;
    bottom: -3px;
    width: 4px;
    height: 4px;
    background: #111;
  }
`

/* ---------- scrollbars, tabs, status ---------- */

const VScroll = styled.div`
  width: 17px;
  flex: none;
  display: flex;
  flex-direction: column;
  align-items: stretch;
  background: #dfe5ea;
  border-left: 1px solid #c3cad0;
  box-sizing: border-box;
`

const SplitBox = styled.div`
  height: 6px;
  box-sizing: border-box;
  margin: 3px 2px 2px;
  border: 1px solid #8f9aa5;
  background: #eef1f4;
`

const VArrow = styled.div`
  height: 12px;
  display: flex;
  align-items: center;
  justify-content: center;
`

const VThumb = styled.div`
  height: 203px;
  box-sizing: border-box;
  display: flex;
  align-items: center;
  justify-content: center;
  background: linear-gradient(90deg, #e6ecf0, #cfdce3);
  border: 1px solid #a9b3bb;
  border-radius: 2px;
`

const Grip = styled.div`
  width: 8px;
  height: 5px;
  border-top: 1px solid #8a949d;
  border-bottom: 1px solid #8a949d;
`

const VTrack = styled.div`
  flex: 1;
`

const TabStrip = styled.div`
  display: flex;
  align-items: center;
  height: 14px;
  flex: none;
  background: #dfe4e9;
  font-size: 10.5px;
`

const SheetNav = styled.div`
  width: 53px;
  box-sizing: border-box;
  padding: 0 8px 0 5px;
  display: flex;
  align-items: center;
  justify-content: space-between;
`

const YellowTab = styled.div`
  width: 164px;
  height: 14px;
  display: flex;
  align-items: center;
  justify-content: center;
  background: #f8f82a;
  font-size: 10.2px;
  color: #2c2c00;
`

const CurrentTab = styled.div`
  width: 100px;
  height: 14px;
  display: flex;
  align-items: center;
  justify-content: center;
  font-size: 10.2px;
  font-weight: 700;
  color: #1d1d1d;
  background: linear-gradient(#fdfdfd, #f6dedb);
`

const NewTab = styled.div`
  width: 22px;
  display: flex;
  justify-content: center;
`

const StripSpacer = styled.div`
  width: 382px;
`

const HThumb = styled.div`
  width: 293px;
  height: 13px;
  margin-left: 3px;
  display: flex;
  align-items: center;
  justify-content: center;
  box-sizing: border-box;
  border: 1px solid #b3bbc3;
  border-radius: 2px;
  background: linear-gradient(#e9eef1, #d5dee3);
`

const HGrip = styled.div`
  width: 5px;
  height: 5px;
  border-left: 1px solid #8a949d;
  border-right: 1px solid #8a949d;
`

const StripEnd = styled.div`
  flex: 1;
  display: flex;
  align-items: center;
  justify-content: flex-end;
  gap: 7px;
  padding-right: 17px;
`

const HSplit = styled.div`
  width: 4px;
  height: 11px;
  border: 1px solid #8f9aa5;
  background: #f2f4f6;
`

const StatusBar = styled.div`
  display: flex;
  align-items: center;
  height: 17px;
  flex: none;
  background: linear-gradient(#dde2e7, #c6cdd4);
  border-top: 1px solid #b4bbc2;
  box-sizing: border-box;
  font-size: 9.6px;
  color: #5a636c;
`

const ReadyText = styled.div`
  width: 40px;
  box-sizing: border-box;
  padding-left: 7px;
  border-right: 1px solid #aeb5bc;
`

const StatusSpacer = styled.div`
  flex: 1;
`

const ViewButtons = styled.div`
  display: flex;
  align-items: center;
  gap: 1px;
  margin-right: 8px;
`

const ViewButton = styled.div<{ $on?: boolean }>`
  width: 15px;
  height: 15px;
  display: flex;
  align-items: center;
  justify-content: center;
  background: ${(p) => (p.$on ? '#f6d876' : 'transparent')};
`

const ZoomText = styled.div`
  font-size: 10px;
  width: 29px;
`

const ZoomCircle = styled.div`
  width: 13px;
  height: 13px;
  display: flex;
  align-items: center;
  justify-content: center;
  font-weight: 700;
  font-size: 11px;
  line-height: 11px;
  color: #49535d;
  border-radius: 50%;
  border: 1px solid #8f9aa5;
  background: #eef1f4;
`

const ZoomTrack = styled.div`
  position: relative;
  width: 80px;
  height: 1px;
  background: #a6aeb6;
  margin: 0 1px;
`

const ZoomHandle = styled.span`
  position: absolute;
  left: 36px;
  top: -5px;
  width: 6px;
  height: 10px;
  border: 1px solid #8f9aa5;
  border-radius: 1px 1px 3px 3px;
  background: #f2f4f6;
`

const StatusEnd = styled.div`
  width: 1px;
`

export default App
